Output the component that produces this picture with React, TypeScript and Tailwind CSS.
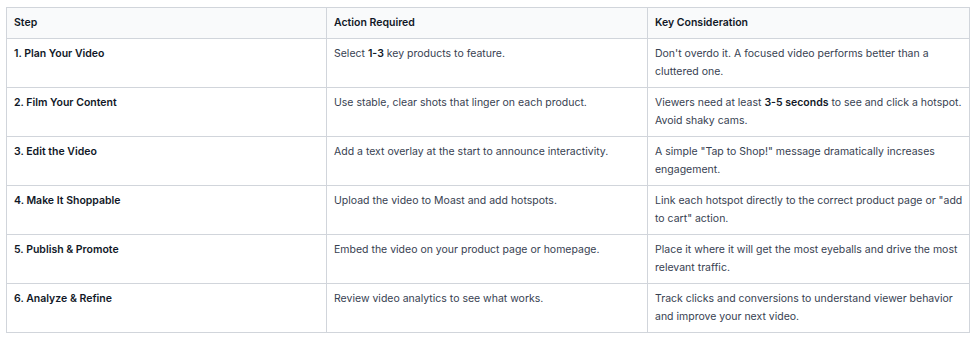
import React from 'react';

interface Row {
  step: string;
  action: React.ReactNode;
  note: React.ReactNode;
}

const rows: Row[] = [
  {
    step: '1. Plan Your Video',
    action: (
      <>
        Select <strong className="font-semibold text-[#111827]">1-3</strong> key products to feature.
      </>
    ),
    note: "Don't overdo it. A focused video performs better than a cluttered one.",
  },
  {
    step: '2. Film Your Content',
    action: 'Use stable, clear shots that linger on each product.',
    note: (
      <>
        Viewers need at least <strong className="font-semibold text-[#111827]">3-5 seconds</strong> to see and click a
        hotspot. Avoid shaky cams.
      </>
    ),
  },
  {
    step: '3. Edit the Video',
    action: 'Add a text overlay at the start to announce interactivity.',
    note: 'A simple "Tap to Shop!" message dramatically increases engagement.',
  },
  {
    step: '4. Make It Shoppable',
    action: 'Upload the video to Moast and add hotspots.',
    note: 'Link each hotspot directly to the correct product page or "add to cart" action.',
  },
  {
    step: '5. Publish & Promote',
    action: 'Embed the video on your product page or homepage.',
    note: 'Place it where it will get the most eyeballs and drive the most relevant traffic.',
  },
  {
    step: '6. Analyze & Refine',
    action: 'Review video analytics to see what works.',
    note: 'Track clicks and conversions to understand viewer behavior and improve your next video.',
  },
];

export default function App() {
  return (
    <div className="bg-white min-h-[339px] px-[6px] pt-[7px] font-['Inter','Liberation_Sans',sans-serif] text-[10.5px] leading-[18px]">
      <table className="w-[963px] table-fixed border-collapse border border-[#d1d5db]">
        <colgroup>
          <col className="w-[320px]" />
          <col className="w-[321px]" />
          <col className="w-[322px]" />
        </colgroup>
        <thead>
          <tr className="bg-[#f9fafb]">
            {['Step', 'Action Required', 'Key Consideration'].map((h) => (
              <th
                key={h}
                className="border border-[#d1d5db] pl-[7px] pr-[3px] py-[6px] text-left align-top font-semibold text-[#111827]">
                {h}
              </th>
            ))}
          </tr>
        </thead>
        <tbody>
          {rows.map((r) => (
            <tr key={r.step} className="h-[49px]">
              <td className="border border-[#d1d5db] pl-[7px] pr-[3px] py-[6px] align-top font-semibold text-[#111827]">
                {r.step}
              </td>
              <td className="border border-[#d1d5db] pl-[7px] pr-[3px] py-[6px] align-top text-[#374151]">{r.action}</td>
              <td className="border border-[#d1d5db] pl-[7px] pr-[3px] py-[6px] align-top text-[#374151]">{r.note}</td>
            </tr>
          ))}
        </tbody>
      </table>
    </div>
  );
}
